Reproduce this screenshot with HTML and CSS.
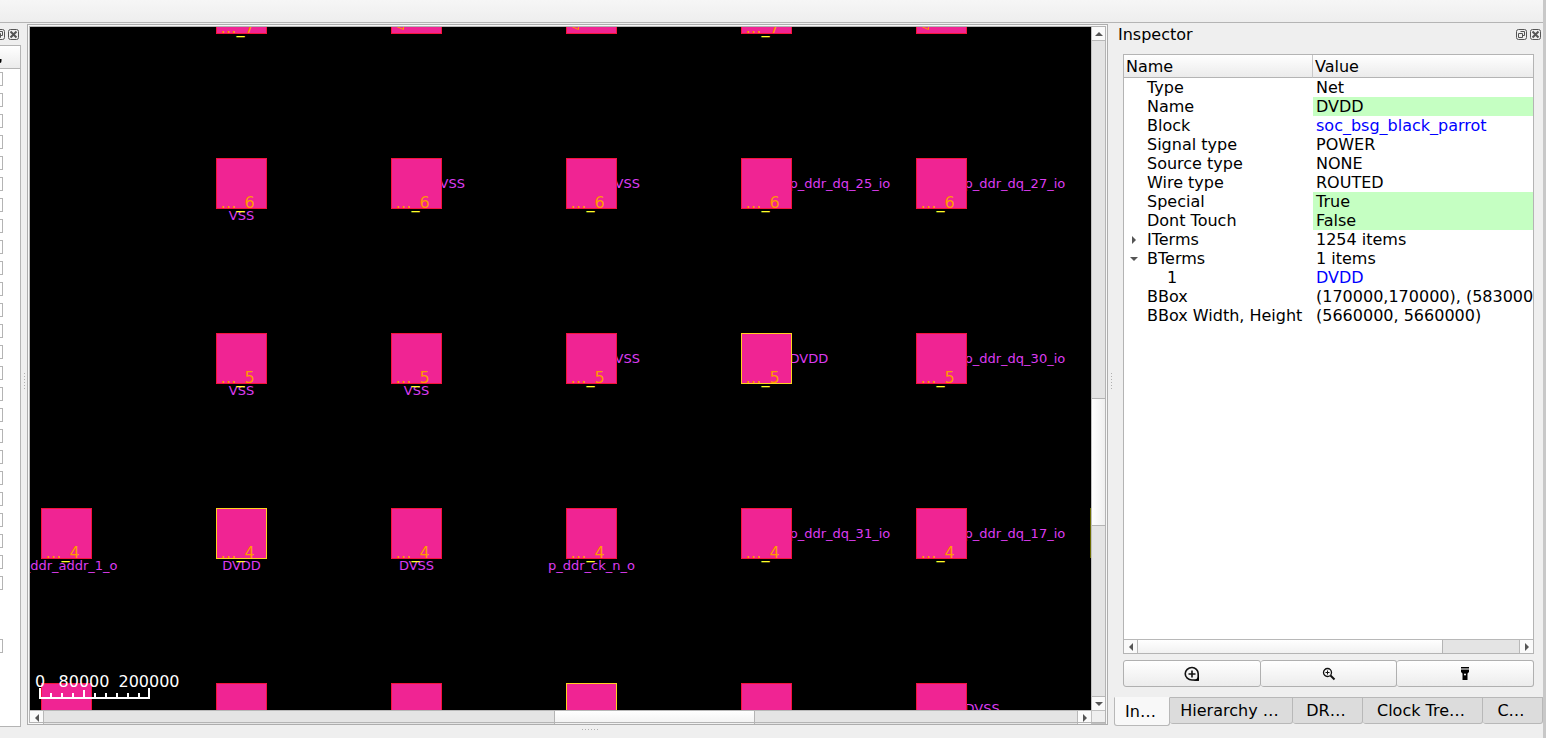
FILE: index.html
```html
<!DOCTYPE html>
<html lang="en">
<head>
<meta charset="utf-8">
<title>Layout viewer</title>
<link rel="stylesheet" href="styles.css">
</head>
<body>
<div class="window">
  <header class="toolbar"></header>
  <main class="workspace">
    <aside class="left-dock">
      <div class="dock-buttons">
        <button class="dock-btn" aria-label="Float display panel"><svg width="11" height="11"><use href="#i-float"/></svg></button>
        <button class="dock-btn" aria-label="Close display panel"><svg width="11" height="11"><use href="#i-close"/></svg></button>
      </div>
      <div class="layer-panel">
        <div class="layer-head"><svg width="3" height="9"><path d="M0 2h1.500v2q0 2-1.500 2z"/></svg></div>
        <div class="layer-list" id="layers"></div>
      </div>
    </aside>
    <div class="splitter"><span class="grip"></span></div>
    <section class="viewer">
      <div class="viewer-frame">
        <svg class="canvas" id="canvas" role="img" aria-label="Chip layout"></svg>
        <div class="vbar">
          <button class="arrow" aria-label="Scroll up"><svg width="8" height="4"><path d="M0 4L4 0L8 4z"/></svg></button>
          <div class="track-v"><div class="thumb-v"></div></div>
          <button class="arrow" aria-label="Scroll down"><svg width="8" height="4"><path d="M0 0L4 4L8 0z"/></svg></button>
        </div>
        <div class="hbar">
          <button class="arrow" aria-label="Scroll left"><svg width="4" height="8"><path d="M4 0L0 4L4 8z"/></svg></button>
          <div class="track-h"><div class="thumb-h"></div></div>
          <button class="arrow" aria-label="Scroll right"><svg width="4" height="8"><path d="M0 0L4 4L0 8z"/></svg></button>
        </div>
        <div class="corner"></div>
      </div>
      <div class="bottom-splitter"><span class="grip-h"></span></div>
    </section>
    <div class="splitter"><span class="grip"></span></div>
    <aside class="inspector">
      <div class="title">
        <h1>Inspector</h1>
        <button class="dock-btn" aria-label="Float inspector"><svg width="11" height="11"><use href="#i-float"/></svg></button>
        <button class="dock-btn" aria-label="Close inspector"><svg width="11" height="11"><use href="#i-close"/></svg></button>
      </div>
      <div class="body">
        <div class="tree">
          <div class="tree-view">
            <table>
              <thead><tr><th class="name-col">Name</th><th>Value</th></tr></thead>
              <tbody>
                <tr><td>Type</td><td>Net</td></tr>
                <tr><td>Name</td><td class="editable">DVDD</td></tr>
                <tr><td>Block</td><td><a href="#">soc_bsg_black_parrot</a></td></tr>
                <tr><td>Signal type</td><td>POWER</td></tr>
                <tr><td>Source type</td><td>NONE</td></tr>
                <tr><td>Wire type</td><td>ROUTED</td></tr>
                <tr><td>Special</td><td class="editable">True</td></tr>
                <tr><td>Dont Touch</td><td class="editable">False</td></tr>
                <tr><td class="branch"><svg class="twist" width="8" height="9"><path d="M2 0L6 4L2 8z"/></svg>ITerms</td><td>1254 items</td></tr>
                <tr><td class="branch"><svg class="twist" width="8" height="9"><path d="M0 2L4 6L8 2z"/></svg>BTerms</td><td>1 items</td></tr>
                <tr><td class="child">1</td><td><a href="#">DVDD</a></td></tr>
                <tr><td>BBox</td><td>(170000,170000), (5830000,5830000)</td></tr>
                <tr><td>BBox Width, Height</td><td>(5660000, 5660000)</td></tr>
              </tbody>
            </table>
          </div>
          <div class="hbar">
            <button class="arrow" aria-label="Scroll left"><svg width="4" height="8"><path d="M4 0L0 4L4 8z"/></svg></button>
            <div class="track-h"><div class="thumb-tree"></div></div>
            <button class="arrow" aria-label="Scroll right"><svg width="4" height="8"><path d="M0 0L4 4L0 8z"/></svg></button>
          </div>
        </div>
        <div class="actions">
          <button aria-label="Zoom to"><svg width="16" height="16" viewBox="0 0 16 16"><path d="M8 1.5a6.500 6 0 1 0 0 12.500h6.200V7.700A6.200 6.200 0 0 0 8 1.500z" fill="none" stroke="#111" stroke-width="1.600"/><path d="M14.800 9v5.700H9q4.500-1 5.800-5.700z"/><path d="M8 4.500v7M4.500 8h7" stroke="#111" stroke-width="1.600"/></svg></button>
          <button aria-label="Zoom in"><svg width="14" height="14" viewBox="0 0 14 14" fill="none" stroke="#111"><circle cx="5.500" cy="5.500" r="4" stroke-width="1.300"/><path d="M8.500 8.500L12.500 12.500" stroke-width="2"/><path d="M5.500 3.500v4M3.500 5.500h4"/></svg></button>
          <button aria-label="Highlight"><svg width="10" height="15" viewBox="0 0 10 15"><path d="M1 1h8v1.500H1zM1 4h8v2L7.500 7.500V14h-5V7.500L1 6z"/><path d="M1 2.500h8V4H1z" fill="#888"/><circle cx="5" cy="8.500" r="1" fill="#fff"/></svg></button>
        </div>
      </div>
      <div class="tabs" role="tablist">
        <button role="tab" class="tab active" aria-selected="true">In…</button>
        <button role="tab" class="tab t2">Hierarchy …</button>
        <button role="tab" class="tab t3">DR…</button>
        <button role="tab" class="tab t4">Clock Tre…</button>
        <button role="tab" class="tab t5">C…</button>
      </div>
    </aside>
  </main>
</div>
<svg class="defs" width="0" height="0">
  <symbol id="i-float" viewBox="0 0 11 11"><rect x=".5" y=".5" width="10" height="10" rx="2" fill="none" stroke="#555"/><path d="M4.500 2.500h4v4h-2M2.500 4.500h4v4h-4z" fill="none" stroke="#555"/></symbol>
  <symbol id="i-close" viewBox="0 0 11 11"><rect x=".5" y=".5" width="10" height="10" rx="2" fill="none" stroke="#555"/><path d="M2.500 2.500l6 6M8.500 2.500l-6 6" stroke="#555" stroke-width="2"/></symbol>
</svg>
<script src="layout.js"></script>
</body>
</html>
```
FILE: styles.css
```css
* { box-sizing: border-box; }
body { margin: 0; background: #efefef; color: #000; font: 16px/19px "DejaVu Sans", sans-serif; }
button { font: inherit; color: inherit; padding: 0; margin: 0; border: 0; background: none; }
svg { display: block; flex: none; }
.defs { position: absolute; }
.window { height: 100vh; display: flex; flex-direction: column; border-right: 3px solid #c8c8c8; overflow: hidden; }
.toolbar { flex: none; height: 23px; background: linear-gradient(#f6f6f6, #eee); border-bottom: 1px solid #b4b4b4; }
.workspace { flex: 1; min-height: 0; display: flex; }

.left-dock { width: 21px; flex: none; display: flex; flex-direction: column; padding-bottom: 11px; }
.dock-buttons { height: 22px; display: flex; justify-content: flex-end; align-items: center; gap: 3px; padding-right: 2px; overflow: hidden; }
.dock-btn { width: 11px; height: 11px; flex: none; }
.layer-panel { flex: 1; min-height: 0; overflow: hidden; background: #fff; border: 1px solid #b4b4b4; border-left: 0; }
.layer-head { height: 23px; padding-top: 11px; background: linear-gradient(#fff, #ebebeb); border-bottom: 1px solid #b4b4b4; }
.layer-list { padding-top: 3px; }
.layer-row { height: 21px; }
.layer-row input { display: block; appearance: none; margin: 0; width: 3px; height: 14px; border: 1px solid #b4b4b4; border-left: 0; background: #fff; }

.splitter { width: 6px; flex: none; display: flex; align-items: center; justify-content: center; }
.grip { width: 1px; height: 16px; background: repeating-linear-gradient(#b0b0b0 0 1px, transparent 1px 3px); }
.viewer { flex: 1; min-width: 0; display: flex; flex-direction: column; padding-top: 1px; }
.viewer-frame { flex: 1; min-height: 0; display: grid; grid-template-columns: minmax(0, 1fr) 15px; grid-template-rows: minmax(0, 1fr) 14px; border: 1px solid #adadad; outline: 1px solid #b4b4b4; outline-offset: -3px; padding: 2px 1px 0 2px; background: #f7f7f7; }
.canvas { width: 100%; height: 100%; background: #000; overflow: hidden; font: 16px "DejaVu Sans", sans-serif; }
.corner { background: #efefef; border: 1px solid #c0c0c0; border-right-color: #adadad; }
.bottom-splitter { height: 13px; flex: none; display: flex; justify-content: center; padding-top: 4px; padding-left: 45px; }
.grip-h { width: 16px; height: 1px; background: repeating-linear-gradient(90deg, #b0b0b0 0 1px, transparent 1px 3px); }

.arrow { width: 13px; height: 13px; flex: none; display: flex; align-items: center; justify-content: center; background: #fafafa; fill: #555; }
.vbar { display: flex; flex-direction: column; background: #e4e4e4; border-left: 1px solid #c0c0c0; border-right: 1px solid #adadad; }
.vbar .arrow { width: 100%; }
.track-v { flex: 1; display: flex; flex-direction: column; border: solid #b8b8b8; border-width: 1px 0; }
.track-v::before { content: ""; flex: 359; }
.track-v::after { content: ""; flex: 171; }
.thumb-v { flex: 126; background: linear-gradient(90deg, #fff, #efefef); border: solid #b4b4b4; border-width: 1px 0; }
.hbar { display: flex; height: 14px; background: #e4e4e4; border-top: 1px solid #b8b8b8; }
.hbar .arrow { height: 100%; }
.track-h { flex: 1; display: flex; border: solid #b8b8b8; border-width: 0 1px; }
.thumb-h, .thumb-tree { background: linear-gradient(#fff, #f1f1f1); border: solid #b4b4b4; border-width: 0 1px; }
.track-h:has(.thumb-h)::before { content: ""; flex: 511; }
.track-h:has(.thumb-h)::after { content: ""; flex: 323; }
.thumb-h { flex: 199; }
.thumb-tree { width: 80%; border-left: 0; }

.pad { fill: #f02493; stroke: #f5143c; }
.pad.selected { stroke: #ffd21e; }
.net { fill: #dc3cf0; font-size: 13px; }
.name { fill: #ff9a00; text-anchor: middle; }
.name tspan { fill: #ffff28; }
.middle { text-anchor: middle; }
.scale { fill: none; stroke: #fff; stroke-width: 2; }
.scale-text { fill: #fff; }
.edge { fill: #6b6b00; }

.inspector { width: 429px; flex: none; display: flex; flex-direction: column; padding-bottom: 12px; }
.title { height: 23px; flex: none; display: flex; align-items: center; gap: 3px; padding: 0 2px 0 4px; }
.title h1 { margin: 0; flex: 1; font-size: 16px; font-weight: 400; }
.body { flex: 1; min-height: 0; display: flex; flex-direction: column; gap: 6px; padding: 8px 9px 10px; }
.tree { flex: 1; min-height: 0; display: flex; flex-direction: column; background: #fff; border: 1px solid #b4b4b4; }
.tree-view { flex: 1; min-height: 0; overflow: hidden; }
.tree .hbar { flex: none; }
table { width: 100%; table-layout: fixed; border-collapse: separate; border-spacing: 0; }
th { height: 23px; padding: 1px 2px 0; text-align: left; font-weight: 400; background: linear-gradient(#fff, #ebebeb); border-bottom: 1px solid #b4b4b4; }
.name-col { width: 189px; border-right: 1px solid #c8c8c8; }
td { height: 19px; padding: 0 0 0 3px; white-space: nowrap; overflow: hidden; }
td:first-child { padding-left: 23px; }
td.child:first-child { padding-left: 43px; }
td.branch:first-child { padding-left: 6px; }
.twist { display: inline-block; margin-right: 9px; fill: #555; }
.editable { background: #c5ffc2; }
a { color: #00f; text-decoration: none; }
.actions { flex: none; height: 27px; display: flex; }
.actions button { flex: 1; display: flex; align-items: center; justify-content: center; border: 1px solid #b0b0b0; border-radius: 3px; background: linear-gradient(#fff, #ececec); }
.actions button + button { border-left: 0; }
.tabs { flex: none; height: 29px; display: flex; align-items: flex-start; }
.tab { height: 27px; padding-right: 3px; border: 1px solid #b8b8b8; border-left: 0; border-radius: 0 0 3px 3px; background: #dcdcdc; white-space: nowrap; }
.tab.active { height: 29px; width: 56px; border-left: 1px solid #b8b8b8; border-top-color: transparent; background: #f8f8f8; }
.t2 { width: 123px; }
.t3 { width: 70px; }
.t4 { width: 120px; }
.t5 { width: 60px; }
```
FILE: layout.js
```js
const NS = "http://www.w3.org/2000/svg";
const canvas = document.getElementById("canvas");

function add(tag, attrs, text) {
  const el = document.createElementNS(NS, tag);
  for (const key in attrs) el.setAttribute(key, attrs[key]);
  if (text) el.textContent = text;
  canvas.appendChild(el);
  return el;
}

const PITCH = 175;
const SIZE = 50;

// [column, row, row number, net, label side, selected]
const pads = [
  [1, 0, "7"], [2, 0, ""], [3, 0, ""], [4, 0, "7"], [5, 0, ""],
  [1, 1, "6", "VSS", "below"], [2, 1, "6", "VSS", "right"], [3, 1, "6", "VSS", "right"],
  [4, 1, "6", "p_ddr_dq_25_io", "right"], [5, 1, "6", "p_ddr_dq_27_io", "right"],
  [1, 2, "5", "VSS", "below"], [2, 2, "5", "VSS", "below"], [3, 2, "5", "VSS", "right"],
  [4, 2, "5", "DVDD", "right", true], [5, 2, "5", "p_ddr_dq_30_io", "right"],
  [0, 3, "4", "p_ddr_addr_1_o", "below"], [1, 3, "4", "DVDD", "below", true],
  [2, 3, "4", "DVSS", "below"], [3, 3, "4", "p_ddr_ck_n_o", "below"],
  [4, 3, "4", "p_ddr_dq_31_io", "right"], [5, 3, "4", "p_ddr_dq_17_io", "right"],
  [0, 4, ""], [1, 4, ""], [2, 4, ""], [3, 4, "", "", "", true], [4, 4, ""],
  [5, 4, "", "DVSS", "right"]
];

for (const [col, row, num, net, side, selected] of pads) {
  const x = 11.5 + col * PITCH;
  const y = -43.5 + row * PITCH;
  if (net && side === "right") add("text", { x: x + 48, y: y + 29, class: "net" }, net);
  add("rect", { x, y, width: SIZE, height: SIZE, class: selected ? "pad selected" : "pad" });
  if (net && side === "below") add("text", { x: x + 25, y: y + 61, class: "net middle" }, net);
  if (num) {
    const name = add("text", { x: x + 21, y: y + 49, class: "name" }, "…");
    const bar = document.createElementNS(NS, "tspan");
    bar.textContent = "_";
    name.append(bar, num);
  } else if (row === 0) {
    add("path", { d: `M${x + 5} ${y + 43}l7 3v-3`, fill: "none", stroke: "#ff9a00" });
  }
}

add("rect", { x: 1060, y: 481, width: 1, height: 50, class: "edge" });

// Scale bar: 11px per division
let ticks = "M10 661v10H119v-10";
for (let i = 1; i < 10; i++) ticks += `M${10 + i * 11} 671v${i === 4 ? -8 : -5}`;
add("path", { d: ticks, class: "scale" });
add("text", { x: 10, y: 660, class: "scale-text middle" }, "0");
add("text", { x: 54, y: 660, class: "scale-text middle" }, "80000");
add("text", { x: 119, y: 660, class: "scale-text middle" }, "200000");

const layers = document.getElementById("layers");
for (let i = 0; i < 28; i++) {
  const row = document.createElement("div");
  row.className = "layer-row";
  if (i < 25 || i === 27) {
    const box = document.createElement("input");
    box.type = "checkbox";
    box.setAttribute("aria-label", "Layer " + (i + 1));
    row.appendChild(box);
  }
  layers.appendChild(row);
}
```
